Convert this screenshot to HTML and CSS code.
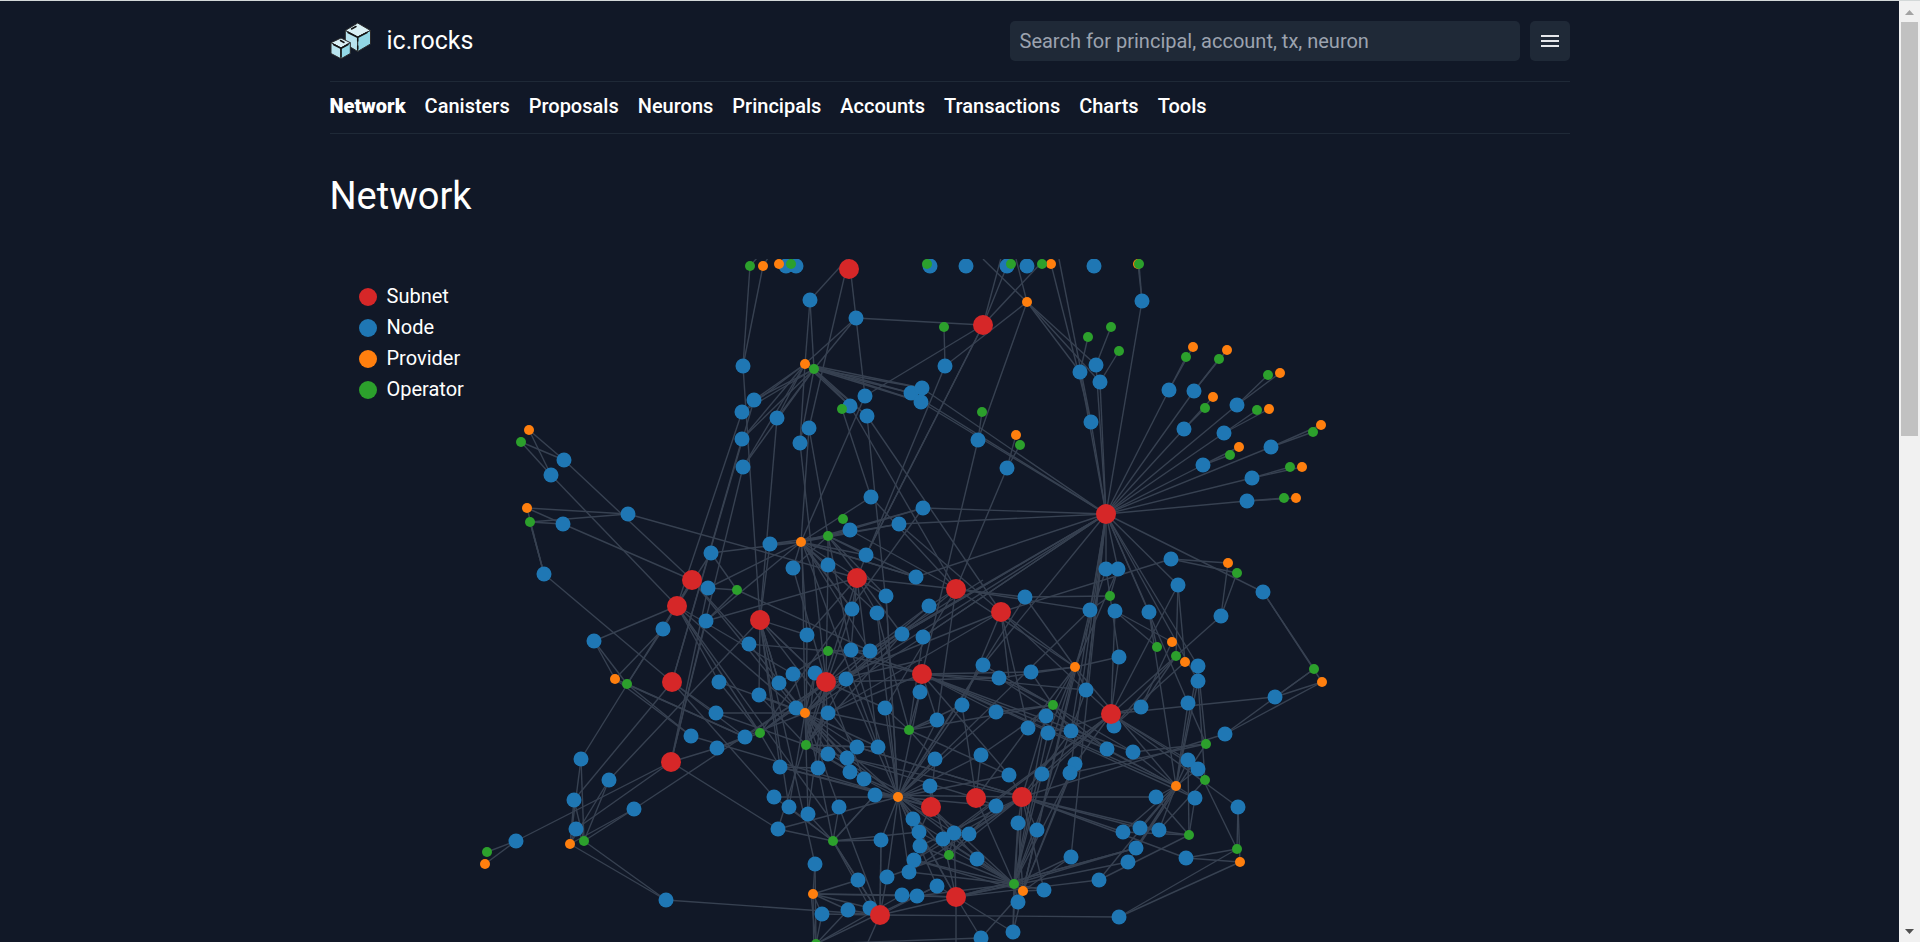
FILE: index.html
```html
<!DOCTYPE html>
<html lang="en">
<head>
<meta charset="utf-8">
<title>Network | ic.rocks</title>
<link rel="stylesheet" href="styles.css">
</head>
<body>
<div class="window">
  <div class="page">
    <div class="container">
      <header class="header">
        <a class="brand" href="#">
          <svg class="brand-logo" viewBox="0 0 42 40" aria-hidden="true">
            <g stroke="#2b2a2b" stroke-width="1" stroke-linejoin="round">
              <path fill="#d9eff4" d="M27.7 2 40.5 9.5 27.7 16 15.3 9.5z"/>
              <path fill="#b8e3ee" d="M15.3 9.5 27.7 16V30.5L15.3 23z"/>
              <path fill="#92d7e5" d="M40.5 9.5 27.7 16V30.5L40.5 23z"/>
              <path fill="#d9eff4" d="M11 17 20.3 21.7 11 27 1 21.7z"/>
              <path fill="#b8e3ee" d="M1 21.7 11 27V37.8L1 32.5z"/>
              <path fill="#92d7e5" d="M20.3 21.7 11 27V37.8L20.3 32.5z"/>
            </g>
            <g class="brand-ink">
              <path d="M18 11.5 27.7 16.5 37 11.5M27.7 16.5V20M27.7 25V28"/>
              <path d="M21.5 8 26 5.5M3.5 23.5 11 27.5 18 23.5M11 27.5V36M10.5 19.5 14 21.5"/>
            </g>
          </svg>
          <span>ic.rocks</span>
        </a>
        <form class="search">
          <input class="search-input" type="text" aria-label="Search" placeholder="Search for principal, account, tx, neuron">
          <button class="menu-button" type="button" aria-label="Menu">
            <svg width="18" height="14" viewBox="0 0 18 14" aria-hidden="true"><path d="M0 2h18M0 7h18M0 12h18" stroke="#e5e7eb" stroke-width="2"/></svg>
          </button>
        </form>
      </header>
      <nav class="nav">
        <a class="nav-link active" href="#">Network</a>
        <a class="nav-link" href="#">Canisters</a>
        <a class="nav-link" href="#">Proposals</a>
        <a class="nav-link" href="#">Neurons</a>
        <a class="nav-link" href="#">Principals</a>
        <a class="nav-link" href="#">Accounts</a>
        <a class="nav-link" href="#">Transactions</a>
        <a class="nav-link" href="#">Charts</a>
        <a class="nav-link" href="#">Tools</a>
      </nav>
      <main>
        <h1 class="title">Network</h1>
        <div class="graph">
          <svg id="network" class="graph-canvas" viewBox="330 259 1240 700" role="img" aria-label="Network graph"></svg>
          <ul class="legend">
            <li class="legend-item"><span class="dot subnet"></span>Subnet</li>
            <li class="legend-item"><span class="dot node"></span>Node</li>
            <li class="legend-item"><span class="dot provider"></span>Provider</li>
            <li class="legend-item"><span class="dot operator"></span>Operator</li>
          </ul>
        </div>
      </main>
    </div>
  </div>
  <div class="scrollbar" aria-hidden="true">
    <svg width="9" height="5" viewBox="0 0 9 5"><path fill="#a3a3a3" d="M0 5 4.5 0 9 5z"/></svg>
    <div class="scrollbar-track"><div class="scrollbar-thumb"></div></div>
    <svg width="9" height="5" viewBox="0 0 9 5"><path fill="#505050" d="M0 0 4.5 5 9 0z"/></svg>
  </div>
</div>
<script src="graph.js"></script>
</body>
</html>
```
FILE: styles.css
```css
* { box-sizing: border-box; }
body {
  margin: 0;
  background: #111827;
  color: #fff;
  font: 20px/30px Roboto, "Liberation Sans", sans-serif;
}
a { color: inherit; text-decoration: none; }
.window {
  display: flex;
  height: 100vh;
  border-top: 1px solid #d3d8d8;
}
.page { flex: 1; min-width: 0; overflow: hidden; }
.container { max-width: 1280px; margin: 0 auto; padding: 0 20px; }
.header {
  display: flex;
  align-items: center;
  justify-content: space-between;
  padding: 20px 0;
}
.brand { display: flex; align-items: center; gap: 15px; font-size: 25px; }
.brand-logo { width: 42px; height: 40px; }
.brand-ink { fill: none; stroke: #141414; stroke-width: 1.5; stroke-linecap: round; }
.search { display: flex; gap: 10px; flex: 0 1 560px; }
.search-input {
  flex: 1;
  min-width: 0;
  height: 40px;
  padding: 0 10px;
  border: 0;
  border-radius: 5px;
  background: #1f2937;
  color: #fff;
  font: inherit;
}
.search-input::placeholder { color: #9ca3af; opacity: 1; }
.menu-button {
  display: flex;
  align-items: center;
  justify-content: center;
  width: 40px;
  height: 40px;
  padding: 0;
  border: 0;
  border-radius: 5px;
  background: #1f2937;
}
.nav {
  display: flex;
  gap: 19px;
  padding: 9px 0 12px;
  border-top: 1px solid #1f2937;
  border-bottom: 1px solid #1f2937;
}
.nav-link { font-weight: 500; }
.nav-link.active { font-weight: 900; }
.title { margin: 37px 0 38px; font-size: 38px; line-height: 50px; font-weight: 400; }
.graph { position: relative; }
.graph-canvas { display: block; width: 100%; }
.graph-canvas line { stroke: #374151; stroke-width: 1.4; }
.legend {
  position: absolute;
  top: 22px;
  left: 29px;
  margin: 0;
  padding: 0;
  list-style: none;
}
.legend-item { display: flex; align-items: center; gap: 10px; line-height: 31px; }
.dot { width: 18px; height: 18px; border-radius: 50%; }
.dot.subnet { background: #d62728; }
.dot.node { background: #1f77b4; }
.dot.provider { background: #ff7f0e; }
.dot.operator { background: #2ca02c; }
.subnet { fill: #d62728; }
.node { fill: #1f77b4; }
.provider { fill: #ff7f0e; }
.operator { fill: #2ca02c; }
.scrollbar {
  display: flex;
  flex-direction: column;
  align-items: center;
  gap: 7px;
  width: 21px;
  padding: 9px 2px 8px;
  background: #f1f1f1;
}
.scrollbar-track { flex: 1; width: 17px; }
.scrollbar-thumb { height: 46%; background: #c1c1c1; }
```
FILE: graph.js
```js
const subnets = [
  [849,269],[983,325],[1106,514],[692,580],[677,606],[857,578],[956,589],[1001,612],[760,620],[672,682],
  [826,682],[922,674],[671,762],[1111,714],[931,807],[976,798],[1022,797],[956,897],[880,915]
];
const providers = [
  [763,266],[779,264],[1051,264],[1027,302],[805,364],[529,430],[527,508],[801,542],[1016,435],[1193,347],
  [1227,350],[1280,373],[1213,397],[1269,409],[1321,425],[1239,447],[1302,467],[1296,498],[1228,563],[615,679],
  [805,713],[1075,667],[1172,642],[1185,662],[1322,682],[1176,786],[898,797],[570,844],[485,864],[813,894],
  [1023,891],[1240,862],[1138,264]
];
const operators = [
  [750,266],[791,264],[927,264],[1011,264],[1042,264],[1139,264],[814,369],[944,327],[1088,337],[1111,327],
  [1119,351],[842,409],[982,412],[1020,445],[521,442],[530,522],[843,519],[828,536],[737,590],[1186,357],
  [1219,359],[1268,375],[1205,408],[1257,410],[1313,432],[1230,455],[1290,467],[1284,498],[1237,573],[1110,596],
  [627,684],[828,651],[760,733],[806,745],[909,730],[833,841],[949,855],[1053,705],[1157,647],[1176,656],
  [1314,669],[1206,744],[1205,780],[1189,835],[1237,849],[1014,884],[584,841],[487,852],[816,944]
];
// x, y, then the indexes of the subnet, provider and operator (-1 for none)
const nodes = [
  [786,266,-1,-1,-1],[796,266,-1,-1,-1],[930,266,-1,-1,-1],[966,266,-1,-1,-1],[1007,266,1,-1,-1],[1027,266,-1,-1,-1],
  [1094,266,-1,-1,-1],[1142,301,2,32,5],[810,300,0,4,6],[856,318,1,4,6],[743,366,8,0,0],[754,400,9,4,6],
  [742,412,4,4,6],[777,418,8,4,6],[742,439,9,4,6],[743,467,12,4,6],[809,428,0,7,17],[800,443,10,4,6],
  [850,406,6,4,6],[867,416,7,4,6],[865,396,0,7,-1],[945,366,5,3,7],[911,393,2,4,6],[922,388,2,4,6],
  [921,402,2,4,6],[978,440,11,3,12],[1007,468,6,8,13],[1080,372,2,3,8],[1096,365,2,3,9],[1100,382,2,3,10],
  [1091,422,2,2,-1],[1169,390,2,9,19],[1194,391,2,10,20],[1237,405,2,11,21],[1184,429,2,12,22],[1224,433,2,13,23],
  [1271,447,2,14,24],[1203,465,2,15,25],[1252,478,2,16,26],[1247,501,2,17,27],[1171,559,7,18,28],[1178,585,2,23,39],
  [1263,592,2,24,40],[1106,569,2,21,29],[1118,569,2,21,29],[564,460,3,5,14],[551,475,4,5,14],[628,514,5,6,15],
  [563,524,3,6,15],[544,574,9,6,15],[711,553,4,7,18],[770,544,8,7,17],[708,588,12,7,18],[793,568,10,7,17],
  [828,565,10,7,17],[594,641,4,19,30],[663,629,3,19,30],[706,621,12,7,18],[749,644,3,20,31],[719,682,4,20,32],
  [716,713,9,20,33],[691,736,14,19,30],[717,748,12,20,32],[745,737,9,19,30],[759,695,8,20,33],[779,683,8,20,31],
  [793,674,4,20,31],[815,673,8,20,33],[796,708,3,20,32],[807,635,8,7,33],[581,759,3,27,46],[574,800,9,27,46],
  [609,780,8,27,46],[576,829,12,27,46],[634,809,10,27,46],[516,841,12,28,47],[666,900,18,27,46],[780,767,8,26,32],
  [774,797,9,26,35],[789,807,8,20,35],[808,814,10,20,35],[778,829,12,26,35],[815,864,8,29,48],[822,914,18,29,48],
  [852,609,5,7,33],[877,613,5,7,34],[886,596,5,26,17],[929,606,6,20,32],[902,634,2,20,33],[923,637,2,20,34],
  [851,650,5,20,31],[870,651,2,20,31],[846,679,2,20,33],[828,713,11,20,33],[885,708,10,26,34],[920,692,11,26,34],
  [937,720,11,26,34],[962,705,7,26,34],[983,665,2,26,37],[999,678,11,21,37],[996,712,11,26,37],[935,759,14,26,34],
  [981,755,15,26,37],[1009,775,16,26,34],[930,786,14,26,36],[996,806,15,26,36],[857,747,16,20,33],[878,747,5,20,33],
  [828,754,10,20,33],[847,758,16,20,33],[818,768,10,20,35],[850,772,14,20,33],[864,779,10,26,33],[875,795,16,26,35],
  [839,807,18,20,35],[913,819,17,26,45],[919,832,14,26,45],[920,846,16,26,45],[914,860,13,30,45],[909,872,16,26,45],
  [943,839,17,30,36],[954,833,13,26,36],[969,834,16,26,36],[977,859,14,30,45],[881,840,18,26,35],[887,877,18,26,36],
  [858,880,18,29,35],[902,895,17,29,48],[917,896,17,29,45],[937,886,17,26,48],[848,910,18,29,48],[870,908,18,29,35],
  [981,938,17,30,48],[1013,932,17,30,45],[1018,902,16,30,45],[1018,823,16,30,45],[1037,830,16,30,45],
  [923,508,2,7,17],[899,524,2,7,17],[871,497,6,7,11],[850,530,6,7,16],[866,555,1,7,17],[916,577,2,7,17],
  [1025,597,6,21,29],[1090,610,6,30,29],[1115,611,13,22,38],[1149,612,2,25,38],[1221,616,13,18,28],[1119,657,13,21,29],
  [1031,672,11,21,37],[1086,690,2,21,45],[1141,707,13,22,39],[1188,703,2,25,41],[1198,666,2,25,41],[1198,681,2,25,42],
  [1275,697,13,24,40],[1225,734,16,24,40],[1046,716,16,21,45],[1028,728,15,21,37],[1048,733,13,21,45],[1071,731,2,25,37],
  [1114,726,13,23,39],[1107,749,11,25,37],[1133,752,11,25,41],[1075,764,13,30,45],[1070,773,2,30,41],[1042,774,13,21,45],
  [1188,760,13,25,43],[1198,769,13,25,44],[1156,797,16,25,43],[1195,798,11,25,43],[1238,807,13,31,44],[1123,832,16,25,43],
  [1140,828,16,25,43],[1159,830,16,25,42],[1136,848,17,25,45],[1128,862,17,25,41],[1099,880,17,25,43],[1071,857,2,30,45],
  [1186,858,16,31,44],[1044,890,16,30,45],[1119,917,18,31,44]
];
// Links that join clusters, or whose far end lies outside the drawing
const loose = [
  [750,266,757,258],[763,266,768,258],[983,325,1001,258],[983,325,1042,262],[1027,302,983,259],
  [1027,302,1016,259],[1091,422,1059,259],[866,555,983,325],[865,396,983,325],[867,416,885,593],
  [1106,514,1090,610],[1106,514,1086,690],[1106,514,902,634],[1106,514,923,637],[898,797,886,596],
  [1014,884,848,758],[805,713,802,542],[802,542,852,609],[813,894,814,960],[956,897,956,960],
  [880,915,860,960],[816,944,811,894],[1013,932,1018,823],[870,651,983,580],[530,522,544,574],
  [677,606,760,733],[677,606,795,708],[677,606,826,813],[760,620,779,683],[760,620,815,673],
  [760,620,857,747],[737,590,870,651],[706,621,857,578],[857,578,956,589],[857,578,778,829],
  [857,578,807,635],[802,542,870,651],[802,542,878,747],[802,542,916,577],[802,542,886,596],
  [828,536,902,634],[828,536,851,650],[899,524,1001,612],[923,508,760,733],[956,589,1075,667],
  [956,589,937,720],[956,589,885,708],[956,589,846,679],[1001,612,1075,667],[1001,612,828,713],
  [1001,612,1009,678],[1001,612,1028,728],[1001,612,1111,714],[922,674,1009,775],[922,674,1176,786],
  [922,674,1086,690],[922,674,851,650],[826,682,922,660],[826,682,999,678],[826,682,1001,612],
  [826,682,745,737],[826,682,760,733],[983,665,1133,752],[999,678,1107,749],[828,651,922,674],
  [909,730,828,713],[909,730,1053,705],[805,713,898,797],[805,713,864,779],[898,797,1025,597],
  [898,797,846,679],[898,797,851,650],[898,797,877,613],[898,797,1090,610],[857,747,1022,797],
  [847,758,976,798],[828,754,931,807],[931,807,780,767],[780,767,818,768],[976,798,962,705],
  [976,798,1014,884],[931,807,1014,884],[1022,797,1111,714],[1022,797,1071,731],[1022,797,914,860],
  [956,897,1136,848],[956,897,919,832],[956,897,954,833],[880,915,937,886],[880,915,1014,884],
  [880,915,881,840],[833,841,880,915],[833,841,875,795],[833,841,919,832],[949,855,1022,797],
  [949,855,898,797],[1075,667,1023,891],[1075,667,1176,786],[1111,714,1178,585]
];

const svg = document.getElementById("network");
function draw(tag, attrs) {
  const el = document.createElementNS("http://www.w3.org/2000/svg", tag);
  for (const key in attrs) el.setAttribute(key, attrs[key]);
  svg.appendChild(el);
}
function link(x1, y1, x2, y2) { draw("line", { x1, y1, x2, y2 }); }

for (const [x, y, s, p, o] of nodes) {
  if (s >= 0) link(x, y, ...(s === 0 ? [849, 257] : subnets[s]));
  if (p >= 0) link(x, y, ...providers[p]);
  if (o >= 0) link(x, y, ...operators[o]);
}
for (const l of loose) link(...l);
for (const [list, name, r] of [[nodes, "node", 7.5], [subnets, "subnet", 10], [providers, "provider", 5], [operators, "operator", 5]]) {
  for (const [cx, cy] of list) draw("circle", { cx, cy, r, class: name });
}
```
